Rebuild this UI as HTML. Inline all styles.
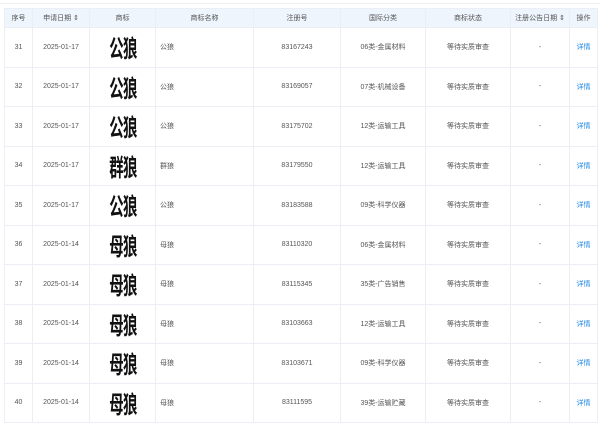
<!DOCTYPE html>
<html><head><meta charset="utf-8"><style>
html,body{margin:0;padding:0;background:#fff;width:600px;height:425px;overflow:hidden}
body{font-family:"Liberation Sans","Noto Sans CJK SC",sans-serif;font-size:7px;color:#555}
.top{position:absolute;left:0;top:0;width:600px;height:3px;border-bottom:1px solid #eee}
table{position:absolute;left:4px;top:8px;border-collapse:collapse;table-layout:fixed;width:593px}
td,th{border:1px solid #ebeef5;text-align:center;padding:0;overflow:hidden;white-space:nowrap}
th{background:#eef5fc;height:18px;font-weight:normal;color:#555}
td{height:38.5px}
td.l{text-align:left;padding-left:4px}
.logo{display:inline-block;width:30px;height:32px;background:#fff;line-height:32px;font-size:24px;font-weight:bold;color:#111;font-family:"Noto Sans CJK SC",sans-serif}
.logo span{display:inline-block;transform:scaleX(0.6);letter-spacing:-1px;margin-left:-8px;margin-right:-8px}
a{color:#1e88e5;text-decoration:none}
</style></head><body>
<div class="top"></div>
<table>
<colgroup><col style="width:28px"><col style="width:57px"><col style="width:66px"><col style="width:98px"><col style="width:87px"><col style="width:85px"><col style="width:85px"><col style="width:59px"><col style="width:28px"></colgroup>
<tr><th>序号</th><th>申请日期 ⇕</th><th>商标</th><th>商标名称</th><th>注册号</th><th>国际分类</th><th>商标状态</th><th>注册公告日期 ⇕</th><th>操作</th></tr>
<tr><td>31</td><td>2025-01-17</td><td><span class="logo"><span>公狼</span></span></td><td class="l">公狼</td><td>83167243</td><td>06类-金属材料</td><td>等待实质审查</td><td>-</td><td><a>详情</a></td></tr>
<tr><td>32</td><td>2025-01-17</td><td><span class="logo"><span>公狼</span></span></td><td class="l">公狼</td><td>83169057</td><td>07类-机械设备</td><td>等待实质审查</td><td>-</td><td><a>详情</a></td></tr>
<tr><td>33</td><td>2025-01-17</td><td><span class="logo"><span>公狼</span></span></td><td class="l">公狼</td><td>83175702</td><td>12类-运输工具</td><td>等待实质审查</td><td>-</td><td><a>详情</a></td></tr>
<tr><td>34</td><td>2025-01-17</td><td><span class="logo"><span>群狼</span></span></td><td class="l">群狼</td><td>83179550</td><td>12类-运输工具</td><td>等待实质审查</td><td>-</td><td><a>详情</a></td></tr>
<tr><td>35</td><td>2025-01-17</td><td><span class="logo"><span>公狼</span></span></td><td class="l">公狼</td><td>83183588</td><td>09类-科学仪器</td><td>等待实质审查</td><td>-</td><td><a>详情</a></td></tr>
<tr><td>36</td><td>2025-01-14</td><td><span class="logo"><span>母狼</span></span></td><td class="l">母狼</td><td>83110320</td><td>06类-金属材料</td><td>等待实质审查</td><td>-</td><td><a>详情</a></td></tr>
<tr><td>37</td><td>2025-01-14</td><td><span class="logo"><span>母狼</span></span></td><td class="l">母狼</td><td>83115345</td><td>35类-广告销售</td><td>等待实质审查</td><td>-</td><td><a>详情</a></td></tr>
<tr><td>38</td><td>2025-01-14</td><td><span class="logo"><span>母狼</span></span></td><td class="l">母狼</td><td>83103663</td><td>12类-运输工具</td><td>等待实质审查</td><td>-</td><td><a>详情</a></td></tr>
<tr><td>39</td><td>2025-01-14</td><td><span class="logo"><span>母狼</span></span></td><td class="l">母狼</td><td>83103671</td><td>09类-科学仪器</td><td>等待实质审查</td><td>-</td><td><a>详情</a></td></tr>
<tr><td>40</td><td>2025-01-14</td><td><span class="logo"><span>母狼</span></span></td><td class="l">母狼</td><td>83111595</td><td>39类-运输贮藏</td><td>等待实质审查</td><td>-</td><td><a>详情</a></td></tr>
</table>
</body></html>
